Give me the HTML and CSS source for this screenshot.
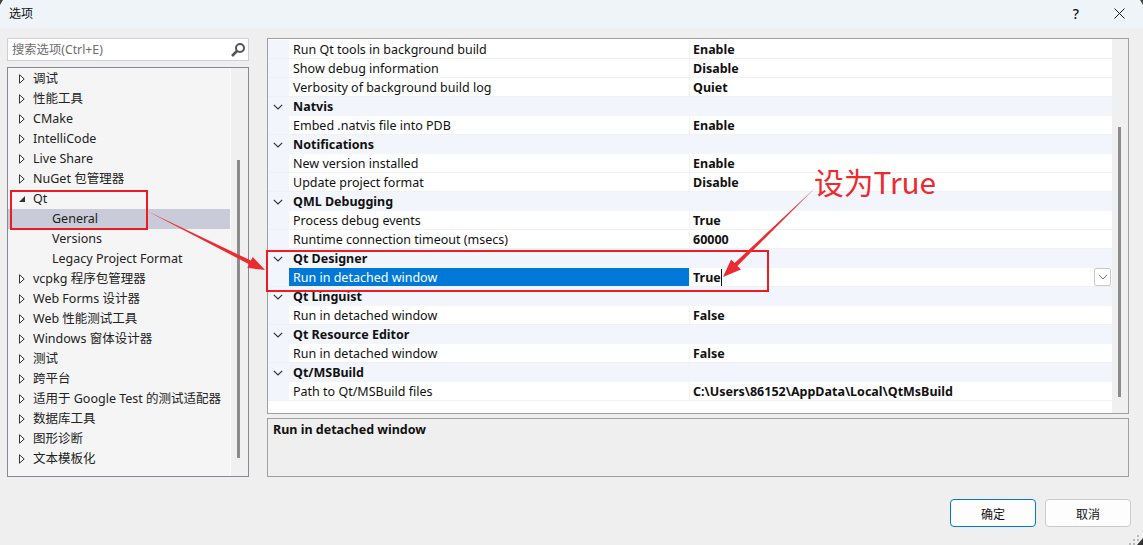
FILE: index.html
```html
<!DOCTYPE html>
<html lang="zh">
<head>
<meta charset="utf-8">
<title>选项</title>
<link rel="stylesheet" href="styles.css">
</head>
<body>
<svg width="0" height="0" class="defs">
  <defs>
    <symbol id="closed" viewBox="0 0 6 10"><path d="M.5.8 5.2 5 .5 9.2Z" fill="#fff" stroke="#333" stroke-width="1"/></symbol>
    <symbol id="open" viewBox="0 0 8 8"><path d="M7 1V7H1Z" fill="#333"/></symbol>
    <symbol id="chev" viewBox="0 0 10 6"><path d="M.8.8 5 5 9.2.8" fill="none" stroke="#333" stroke-width="1.2"/></symbol>
    <symbol id="chev-light" viewBox="0 0 10 6"><path d="M.8.8 5 5 9.2.8" fill="none" stroke="#777" stroke-width="1"/></symbol>
  </defs>
</svg>
<div class="dialog">
  <header class="titlebar">
    <span class="title">选项</span>
    <span class="help">?</span>
    <svg class="close" width="11" height="11" viewBox="0 0 11 11"><path d="M.5.5 10.5 10.5M10.5.5.5 10.5" stroke="#222" stroke-width="1"/></svg>
  </header>
  <main class="content">
    <aside class="left">
      <div class="search">
        <span class="search-text">搜索选项(Ctrl+E)</span>
        <svg width="16" height="16" viewBox="0 0 16 16"><circle cx="10" cy="6" r="4" fill="none" stroke="#555" stroke-width="2"/><path d="M7 9 2 14" stroke="#555" stroke-width="2.6"/></svg>
      </div>
      <div class="tree">
        <ul class="tree-list">
          <li class="node"><svg class="tw"><use href="#closed"/></svg>调试</li>
          <li class="node"><svg class="tw"><use href="#closed"/></svg>性能工具</li>
          <li class="node"><svg class="tw"><use href="#closed"/></svg>CMake</li>
          <li class="node"><svg class="tw"><use href="#closed"/></svg>IntelliCode</li>
          <li class="node"><svg class="tw"><use href="#closed"/></svg>Live Share</li>
          <li class="node"><svg class="tw"><use href="#closed"/></svg>NuGet 包管理器</li>
          <li class="node"><svg class="tw open"><use href="#open"/></svg>Qt</li>
          <li class="node child selected">General</li>
          <li class="node child">Versions</li>
          <li class="node child">Legacy Project Format</li>
          <li class="node"><svg class="tw"><use href="#closed"/></svg>vcpkg 程序包管理器</li>
          <li class="node"><svg class="tw"><use href="#closed"/></svg>Web Forms 设计器</li>
          <li class="node"><svg class="tw"><use href="#closed"/></svg>Web 性能测试工具</li>
          <li class="node"><svg class="tw"><use href="#closed"/></svg>Windows 窗体设计器</li>
          <li class="node"><svg class="tw"><use href="#closed"/></svg>测试</li>
          <li class="node"><svg class="tw"><use href="#closed"/></svg>跨平台</li>
          <li class="node"><svg class="tw"><use href="#closed"/></svg>适用于 Google Test 的测试适配器</li>
          <li class="node"><svg class="tw"><use href="#closed"/></svg>数据库工具</li>
          <li class="node"><svg class="tw"><use href="#closed"/></svg>图形诊断</li>
          <li class="node"><svg class="tw"><use href="#closed"/></svg>文本模板化</li>
        </ul>
        <div class="scroll tree-scroll"><span class="thumb"></span></div>
      </div>
    </aside>
    <section class="right">
      <div class="grid">
        <div class="props">
          <div class="row"><span class="name">Run Qt tools in background build</span><span class="value">Enable</span></div>
          <div class="row"><span class="name">Show debug information</span><span class="value">Disable</span></div>
          <div class="row"><span class="name">Verbosity of background build log</span><span class="value">Quiet</span></div>
          <div class="cat"><svg class="cv"><use href="#chev"/></svg>Natvis</div>
          <div class="row"><span class="name">Embed .natvis file into PDB</span><span class="value">Enable</span></div>
          <div class="cat"><svg class="cv"><use href="#chev"/></svg>Notifications</div>
          <div class="row"><span class="name">New version installed</span><span class="value">Enable</span></div>
          <div class="row"><span class="name">Update project format</span><span class="value">Disable</span></div>
          <div class="cat"><svg class="cv"><use href="#chev"/></svg>QML Debugging</div>
          <div class="row"><span class="name">Process debug events</span><span class="value">True</span></div>
          <div class="row"><span class="name">Runtime connection timeout (msecs)</span><span class="value">60000</span></div>
          <div class="cat"><svg class="cv"><use href="#chev"/></svg>Qt Designer</div>
          <div class="row active"><span class="name">Run in detached window</span><span class="value"><span class="caret">True</span></span>
            <span class="drop"><svg width="10" height="6"><use href="#chev-light"/></svg></span></div>
          <div class="cat"><svg class="cv"><use href="#chev"/></svg>Qt Linguist</div>
          <div class="row"><span class="name">Run in detached window</span><span class="value">False</span></div>
          <div class="cat"><svg class="cv"><use href="#chev"/></svg>Qt Resource Editor</div>
          <div class="row"><span class="name">Run in detached window</span><span class="value">False</span></div>
          <div class="cat"><svg class="cv"><use href="#chev"/></svg>Qt/MSBuild</div>
          <div class="row"><span class="name">Path to Qt/MSBuild files</span><span class="value">C:\Users\86152\AppData\Local\QtMsBuild</span></div>
        </div>
        <div class="scroll grid-scroll"><span class="thumb"></span></div>
      </div>
      <div class="desc">Run in detached window</div>
    </section>
  </main>
  <footer class="footer">
    <button class="btn primary">确定</button>
    <button class="btn">取消</button>
  </footer>
</div>
<svg class="marks" width="1143" height="545" viewBox="0 0 1143 545">
  <g fill="none" stroke="#ed1c24" stroke-width="2">
    <rect x="11" y="191" width="136" height="38"/>
    <rect x="267" y="251" width="501" height="40"/>
  </g>
  <path d="M147 211 250.9 260.6 252.7 257 265 270 247.3 267.8 249.1 264.2Z" fill="#ed2a30"/>
  <path d="M815 188 737.4 265.9 740.9 269.5 723 277 731.1 259.5 734.6 263.1Z" fill="#ed2a30"/>
  <path d="M0 0H3L0 5Z" fill="#444"/>
  <path d="M1143 0H1140L1143 5Z" fill="#444"/>
  <path d="M1143 545H1137L1143 538Z" fill="#333"/>
  <g fill="#bbb">
    <rect x="1137" y="535" width="2" height="2"/>
    <rect x="1133" y="539" width="2" height="2"/>
    <rect x="1137" y="539" width="2" height="2"/>
    <rect x="1129" y="543" width="2" height="2"/>
    <rect x="1133" y="543" width="2" height="2"/>
  </g>
</svg>
<span class="note">设为True</span>
</body>
</html>
```

FILE: styles.css
```css
* { box-sizing: border-box; }
html, body { margin: 0; padding: 0; }
body {
  width: 1143px;
  height: 545px;
  overflow: hidden;
  position: relative;
  background: #efefef;
  color: #111;
  font: 12.5px/19px "Noto Sans", "Noto Sans CJK SC", sans-serif;
}
.defs { position: absolute; }
.dialog { display: flex; flex-direction: column; height: 545px; }
.titlebar {
  display: flex;
  align-items: center;
  height: 28px;
  background: #eff4f9;
  padding: 0 18px 2px 9px;
}
.title { flex: 1; font-size: 12px; }
.help { font-size: 14px; font-weight: 500; margin-right: 35px; }
.content { display: flex; gap: 18px; padding: 10px 14px 0 7px; }
.left { width: 242px; display: flex; flex-direction: column; gap: 6px; }
.search {
  height: 23px;
  display: flex;
  align-items: center;
  justify-content: space-between;
  background: #fff;
  border: 1px solid #cfcfdc;
  padding: 0 2px 0 4px;
}
.search-text { color: #6d6d6d; font-size: 12.3px; }
.tree {
  height: 410px;
  display: flex;
  background: #f5f5f5;
  border: 1px solid #868892;
}
.tree-list { list-style: none; margin: 0; padding: 1px 0 0; width: 222px; }
.node {
  height: 20px;
  line-height: 20px;
  padding-left: 11px;
  display: flex;
  align-items: center;
  white-space: nowrap;
  color: #222;
}
.tw { width: 6px; height: 10px; margin-right: 8px; flex: none; }
.tw.open { width: 8px; height: 8px; margin-left: -1px; margin-right: 7px; }
.child { padding-left: 44px; }
.selected { background: #cacbd9; }
.scroll { flex: 1; background: #f0f0f0; position: relative; border-left: 1px solid #fafafa; }
.thumb { position: absolute; width: 3px; background: #8c8c8c; }
.tree-scroll .thumb { left: 6px; top: 92px; height: 298px; }
.right { width: 862px; display: flex; flex-direction: column; gap: 4px; }
.grid {
  height: 376px;
  display: flex;
  background: #fff;
  border: 1px solid #a0a0a0;
  padding-top: 1px;
}
.props { width: 844px; flex: none; }
.scroll.grid-scroll { border-left: 0; margin-top: -1px; }
.grid-scroll .thumb { left: 6px; top: 88px; height: 270px; }
.row {
  height: 19px;
  display: flex;
  position: relative;
  padding-left: 21px;
  background: linear-gradient(#f2f5fb, #f2f5fb) left / 21px 100% no-repeat;
  border-bottom: 1px solid #f1f1f4;
}
.row .name { width: 400px; padding-left: 4px; white-space: nowrap; }
.row .value {
  flex: 1;
  padding-left: 3px;
  font-weight: 700;
  border-left: 1px solid #f4f4f4;
  white-space: nowrap;
}
.active .name { background: #0078d7; color: #fff; }
.caret { border-right: 1px solid #111; padding-right: 0; }
.drop {
  position: absolute;
  right: 1px;
  top: 0;
  width: 17px;
  height: 18px;
  border: 1px solid #c8c8c8;
  border-radius: 2px;
  background: #fff;
  display: flex;
  align-items: center;
  justify-content: center;
}
.cat {
  height: 19px;
  display: flex;
  align-items: center;
  font-weight: 700;
  background: #f2f5fb;
  padding-left: 5px;
}
.cv { width: 10px; height: 6px; margin-right: 10px; flex: none; }
.desc {
  height: 59px;
  border: 1px solid #a0a0a0;
  padding: 1px 5px;
  font-weight: 700;
}
.footer { display: flex; justify-content: flex-end; gap: 9px; padding: 22px 12px 0 0; }
.btn {
  width: 86px;
  height: 28px;
  background: #fdfdfd;
  border: 1px solid #cbcbcb;
  border-radius: 4px;
  font: 12px "Noto Sans CJK SC", sans-serif;
  color: #111;
  padding: 0;
}
.primary { border: 1px solid #0078d4; }
.marks { position: absolute; left: 0; top: 0; pointer-events: none; }
.note {
  position: absolute;
  left: 814px;
  top: 160px;
  font: 29.8px/42px "Noto Sans CJK SC", sans-serif;
  color: #ed2a30;
  white-space: nowrap;
}
```
